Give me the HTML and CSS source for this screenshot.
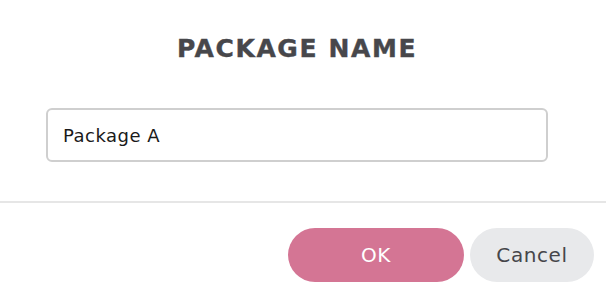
FILE: index.html
```html
<!DOCTYPE html>
<html>
<head>
<meta charset="utf-8">
<link rel="stylesheet" href="styles.css">
</head>
<body>
<div class="dialog">
  <div class="content">
    <h1 class="title">PACKAGE NAME</h1>
    <input class="field" type="text" value="Package A">
  </div>
  <div class="footer">
    <button class="btn btn-ok">OK</button>
    <button class="btn btn-cancel">Cancel</button>
  </div>
</div>
</body>
</html>
```

FILE: styles.css
```css
html, body {
  margin: 0;
  padding: 0;
  background: #ffffff;
}
.dialog {
  width: 606px;
  height: 296px;
  font-family: "DejaVu Sans", sans-serif;
  display: flex;
  flex-direction: column;
}
.content {
  flex: none;
  display: flex;
  flex-direction: column;
  align-items: center;
  padding: 33px 58px 0 46px;
  height: 203px;
  box-sizing: border-box;
  border-bottom: 2px solid #e6e6e6;
}
.title {
  margin: 0;
  font-size: 25px;
  line-height: 32px;
  font-weight: bold;
  color: #47474b;
  letter-spacing: 1.6px;
  -webkit-text-stroke: 0.4px #47474b;
}
.field {
  margin-top: 43px;
  width: 502px;
  height: 54px;
  box-sizing: border-box;
  border: 2px solid #cfcfcf;
  border-radius: 6px;
  padding: 0 15px;
  font-family: "DejaVu Sans", sans-serif;
  font-size: 18px;
  letter-spacing: 0.5px;
  color: #1a1a1a;
  outline: none;
}
.footer {
  display: flex;
  justify-content: flex-end;
  gap: 6px;
  padding: 25px 12px 0 0;
}
.btn {
  height: 54px;
  border: none;
  border-radius: 27px;
  font-family: "DejaVu Sans", sans-serif;
  font-size: 20px;
  letter-spacing: 0.6px;
  padding: 0;
}
.btn-ok {
  width: 176px;
  background: #d47594;
  color: #ffffff;
}
.btn-cancel {
  width: 124px;
  background: #e8e9eb;
  color: #46464a;
}
```
